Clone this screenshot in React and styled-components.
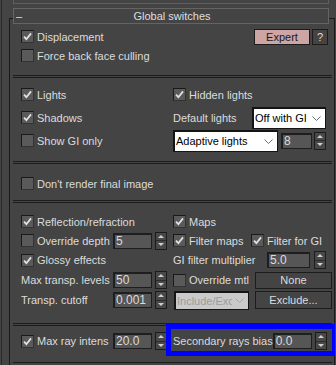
import React from "react";
import styled, { createGlobalStyle } from "styled-components";

const Global = createGlobalStyle`
  html, body { margin: 0; padding: 0; background: #444444; }
  body { font-family: "Liberation Sans", Arial, sans-serif; font-size: 11px; color: #dcdcdc; }
  * { box-sizing: border-box; }
`;

const Page = styled.div`
  width: 334px;
  height: 365px;
  margin-left: 1px;
  border-left: 1px solid #2a2a2a;
  overflow: hidden;
  background: #444444;
`;

const TopStub = styled.div`
  margin-left: 11px;
  width: 316px;
  height: 4px;
  border: 1px solid #5f5f5f;
  border-top: none;
`;

const Rollout = styled.div`
  margin: 14px 0 0 7px;
  width: 326px;
  min-height: 347px;
  border: 1px solid #1b1b1b;
  border-bottom: none;
`;

const Header = styled.div`
  margin: -11px 0 0 3px;
  width: 316px;
  height: 16px;
  border: 1px solid #646464;
  background: #444444;
  display: grid;
  grid-template-columns: 1fr auto 1fr;
  align-items: center;
  padding-left: 2px;
  color: #dedede;
`;

const Dash = styled.span`
  font-size: 11px;
  line-height: 14px;
`;

const Title = styled.span`
  font-size: 11px;
  line-height: 14px;
`;

const Group = styled.div`
  position: relative;
  margin: ${(p) => (p.$first ? "0" : "1px")} 0 0 3px;
  width: 319px;
  border-top: ${(p) => (p.$first ? "none" : "1px solid #1c1c1c")};
  border-bottom: 1px solid #1c1c1c;
  padding: ${(p) => p.$pt}px 0 ${(p) => p.$pb}px 8px;
  display: grid;
  grid-template-columns: 152px 159px;
  grid-template-rows: ${(p) => p.$rows};
`;

const Highlight = styled.div`
  position: absolute;
  left: 153px;
  right: -5px;
  top: -2px;
  bottom: 6px;
  border: 5px solid #0000ff;
  pointer-events: none;
`;

const Cell = styled.div`
  display: flex;
  align-items: center;
  gap: ${(p) => p.$gap || 0}px;
  padding-right: ${(p) => p.$pr || 0}px;
  min-width: 0;
`;

const Check = styled.label`
  display: flex;
  align-items: center;
  gap: 3px;
  flex: none;
  width: ${(p) => (p.$w ? `${p.$w}px` : "auto")};
  white-space: nowrap;
  color: #dcdcdc;
`;

const Box = styled.span`
  width: 13px;
  height: 13px;
  flex: none;
  background: #5a5a5a;
  border: 1px solid;
  border-color: #1a1a1a #333333 #333333 #1a1a1a;
  display: inline-flex;
  align-items: center;
  justify-content: center;
`;

const Label = styled.span`
  white-space: nowrap;
  color: #dcdcdc;
`;

const Field = styled.span`
  width: ${(p) => p.$w}px;
  height: 16px;
  flex: none;
  background: #565656;
  border: 1px solid #1e1e1e;
  border-top-width: 2px;
  border-left-width: 2px;
  color: #dcdcdc;
  font-size: 12px;
  line-height: 13px;
  padding-left: 1px;
  overflow: hidden;
  white-space: nowrap;
`;

const Spin = styled.span`
  width: 12px;
  height: 18px;
  flex: none;
  border: 1px solid #1c1c1c;
  background: #484848;
  display: flex;
  flex-direction: column;
`;

const SpinHalf = styled.span`
  flex: 1;
  display: flex;
  align-items: center;
  justify-content: center;
  & + & {
    border-top: 1px solid #2c2c2c;
  }
`;

const Tri = styled.span`
  width: 0;
  height: 0;
  border-left: 3px solid transparent;
  border-right: 3px solid transparent;
  ${(p) =>
    p.$down
      ? "border-top: 3px solid #cfcfcf;"
      : "border-bottom: 3px solid #cfcfcf;"}
`;

const SpinGroup = styled.span`
  display: flex;
  align-items: center;
  gap: ${(p) => p.$gap ?? 3}px;
  margin-left: auto;
  flex: none;
`;

const Select = styled.span`
  width: ${(p) => p.$w}px;
  height: ${(p) => p.$h}px;
  flex: none;
  margin-left: ${(p) => (p.$auto ? "auto" : `${p.$ml || 0}px`)};
  background: ${(p) => (p.$disabled ? "#cacaca" : "#ffffff")};
  color: ${(p) => (p.$disabled ? "#9c9c9c" : "#000000")};
  border: 1px solid #141414;
  border-top-width: 2px;
  border-left-width: 2px;
  display: flex;
  align-items: center;
  padding: 0 4px 0 1px;
  font-size: 11px;
  gap: 3px;
`;

const SelectText = styled.span`
  flex: 1;
  min-width: 0;
  overflow: hidden;
  white-space: nowrap;
`;

const Button = styled.span`
  width: ${(p) => p.$w}px;
  height: ${(p) => p.$h}px;
  flex: none;
  margin-left: ${(p) => (p.$auto ? "auto" : "0")};
  background: ${(p) => (p.$pink ? "#cda5a5" : "#444444")};
  color: ${(p) => (p.$pink ? "#1a1a1a" : "#dcdcdc")};
  border: 1px solid #1c1c1c;
  display: flex;
  align-items: center;
  justify-content: center;
  font-size: 11px;
`;

const CheckMark = () => (
  <svg width="9" height="9" viewBox="0 0 9 9">
    <polyline
      points="1,4.6 3.4,7.2 8,1.4"
      fill="none"
      stroke="#e2e2e2"
      strokeWidth="1.8"
    />
  </svg>
);

const Chevron = ({ color = "#6e6e6e" }) => (
  <svg width="9" height="5" viewBox="0 0 9 5" style={{ flex: "none" }}>
    <polyline points="0.5,0.5 4.5,4.5 8.5,0.5" fill="none" stroke={color} strokeWidth="1" />
  </svg>
);

const CheckBox = ({ checked, label, w }) => (
  <Check $w={w}>
    <Box>{checked && <CheckMark />}</Box>
    <Label>{label}</Label>
  </Check>
);

const Spinner = ({ value, w, gap }) => (
  <SpinGroup $gap={gap}>
    <Field $w={w}>{value}</Field>
    <Spin>
      <SpinHalf>
        <Tri />
      </SpinHalf>
      <SpinHalf>
        <Tri $down />
      </SpinHalf>
    </Spin>
  </SpinGroup>
);

export default function App() {
  return (
    <>
      <Global />
      <Page>
        <TopStub />
        <Rollout>
          <Header>
            <Dash>–</Dash>
            <Title>Global switches</Title>
            <span />
          </Header>

          <Group $first $pt={3} $pb={10} $rows="19px 19px">
            <Cell>
              <CheckBox checked label="Displacement" />
            </Cell>
            <Cell $pr={4} $gap={2}>
              <Button $pink $auto $w={56} $h={16}>
                Expert
              </Button>
              <Button $w={16} $h={16}>
                ?
              </Button>
            </Cell>
            <Cell>
              <CheckBox label="Force back face culling" />
            </Cell>
            <Cell />
          </Group>

          <Group $pt={5} $pb={9} $rows="23px 23px 23px">
            <Cell>
              <CheckBox checked label="Lights" />
            </Cell>
            <Cell>
              <CheckBox checked label="Hidden lights" />
            </Cell>
            <Cell>
              <CheckBox checked label="Shadows" />
            </Cell>
            <Cell $pr={6}>
              <Label>Default lights</Label>
              <Select $auto $w={74} $h={22}>
                <SelectText>Off with GI</SelectText>
                <Chevron />
              </Select>
            </Cell>
            <Cell>
              <CheckBox label="Show GI only" />
            </Cell>
            <Cell $pr={6}>
              <Select $w={105} $h={22}>
                <SelectText>Adaptive lights</SelectText>
                <Chevron />
              </Select>
              <Spinner value="8" w={31} gap={2} />
            </Cell>
          </Group>

          <Group $pt={10} $pb={7} $rows="19px">
            <Cell>
              <CheckBox label="Don't render final image" />
            </Cell>
            <Cell />
          </Group>

          <Group $pt={9} $pb={13} $rows="19px 19px 20px 20px 20px">
            <Cell>
              <CheckBox checked label="Reflection/refraction" />
            </Cell>
            <Cell>
              <CheckBox checked label="Maps" />
            </Cell>
            <Cell $pr={6}>
              <CheckBox label="Override depth" />
              <Spinner value="5" w={39} />
            </Cell>
            <Cell>
              <CheckBox checked label="Filter maps" w={78} />
              <CheckBox checked label="Filter for GI" />
            </Cell>
            <Cell>
              <CheckBox checked label="Glossy effects" />
            </Cell>
            <Cell $pr={6}>
              <Label>GI filter multiplier</Label>
              <Spinner value="5.0" w={43} gap={4} />
            </Cell>
            <Cell $pr={6}>
              <Label>Max transp. levels</Label>
              <Spinner value="50" w={39} />
            </Cell>
            <Cell>
              <CheckBox label="Override mtl" />
              <Button $auto $w={77} $h={17}>
                None
              </Button>
            </Cell>
            <Cell $pr={6}>
              <Label>Transp. cutoff</Label>
              <Spinner value="0.001" w={39} />
            </Cell>
            <Cell>
              <Select $disabled $ml={1} $w={75} $h={19}>
                <SelectText>Include/Exclude</SelectText>
                <Chevron color="#a8a8a8" />
              </Select>
              <Button $auto $w={77} $h={18}>
                Exclude...
              </Button>
            </Cell>
          </Group>

          <Group $pt={5} $pb={11} $rows="20px">
            <Cell $pr={6}>
              <CheckBox checked label="Max ray intens" />
              <Spinner value="20.0" w={39} />
            </Cell>
            <Cell $pr={6}>
              <Label>Secondary rays bias</Label>
              <Spinner value="0.0" w={39} />
            </Cell>
            <Highlight />
          </Group>
        </Rollout>
      </Page>
    </>
  );
}
